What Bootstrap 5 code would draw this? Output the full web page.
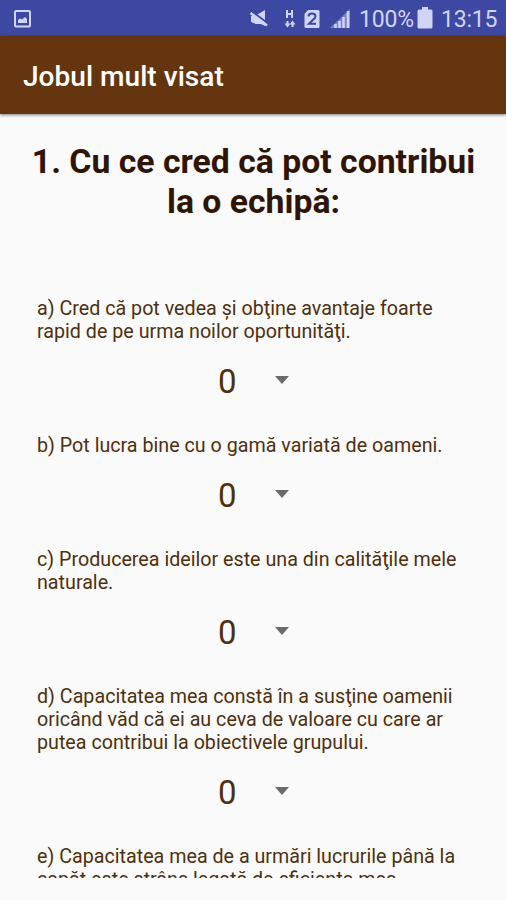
<!DOCTYPE html>
<html lang="ro">
<head>
<meta charset="utf-8">
<meta name="viewport" content="width=device-width, initial-scale=1">
<title>Jobul mult visat</title>
<link href="https://cdn.jsdelivr.net/npm/bootstrap@5.3.0/dist/css/bootstrap.min.css" rel="stylesheet">
<style>
body{font-family:Roboto,"Liberation Sans",sans-serif;background:#fafafa;color:#4e300e;height:900px}
.status-bar{height:36px;background:#3c48a2;color:#d0d5f5;font-size:23px;line-height:34px;padding:2px 10px 0 14px}
.status-bar svg{display:block;flex:none}
.signal{margin-left:10px}
.battery{margin:-2px 0 0 4px}
.pct{margin-left:9px;width:54px;letter-spacing:-.2px;padding-top:2px}
.clock{margin-left:8px;width:55px;letter-spacing:-.2px;padding-top:2px}
.app-bar{height:78px;background:#65350f;padding:4px 23px 0;box-shadow:0 1px 3px rgba(0,0,0,.5);z-index:1}
.app-title{font-size:28.1px;font-weight:500;color:#fff;line-height:1}
.quiz{height:764px;padding:28px 24px 0 25px}
.quiz-title{font-size:33.75px;font-weight:700;line-height:40px;color:#2f1505;margin-bottom:75px}
.question{font-size:19.7px;line-height:23px;padding-left:12px;white-space:nowrap}
.picker{height:91px;padding:19px 0 0 193px;font-size:33px;line-height:40px}
.picker svg{margin:14px 0 0 38px}
</style>
<script src="https://cdn.jsdelivr.net/npm/bootstrap@5.3.0/dist/js/bootstrap.bundle.min.js"></script>
</head>
<body class="overflow-hidden d-flex flex-column">
<header class="status-bar d-flex align-items-center">
  <svg width="17" height="18" viewBox="0 0 17 18"><rect x="1" y="1" width="15" height="15.500" rx="1" fill="none" stroke="#d0d5f5" stroke-width="2"/><path d="M4 13V10l2-1.500 2 1 3-2.500 2 2v4z" fill="#d0d5f5"/></svg>
  <svg class="ms-auto" width="18" height="20" viewBox="0 0 18 20"><path d="M1 7h4l10-6v16l-4-2H6l-5-2z" fill="#d0d5f5"/><path d="M2 2.500l16 12" stroke="#3c48a2" stroke-width="2"/><path d="M.5 4l16.500 12.500" stroke="#d0d5f5" stroke-width="2.500"/></svg>
  <svg class="ms-3" width="12" height="20" viewBox="0 0 12 20"><path d="M3 1v8M8 1v8M3 5h5" stroke="#d0d5f5" stroke-width="2"/><path d="M3.500 12v4M8.500 14v4" stroke="#d0d5f5" stroke-width="2"/><path d="M.5 14.500h6l-3 4zM5.500 15.500h6l-3-4z" fill="#d0d5f5"/></svg>
  <svg class="ms-2" width="16" height="20" viewBox="0 0 16 20"><path d="M4 1h10q1.500 0 1.500 1.500v15q0 1.500-1.500 1.500H2Q.5 19 .5 17.500V5z" fill="#d0d5f5"/><path d="M4.500 7.500q0-3 3.500-3t3.500 2.700q0 2-3 4L5 14.800h7" fill="none" stroke="#3c48a2" stroke-width="2"/></svg>
  <svg class="signal" width="20" height="20" viewBox="0 0 20 20"><path d="M0 19L20 0v19z" fill="#7983c8"/><path d="M5.500 19v-4M9.500 19v-7M13.500 19V8M18 19V2" stroke="#d0d5f5" stroke-width="2.500"/></svg>
  <span class="pct">100%</span>
  <svg class="battery" width="16" height="22" viewBox="0 0 16 22"><path d="M5 0h6v2.500h3q1.500 0 1.500 1.500v16q0 1.500-1.500 1.500H2Q.5 21.500.5 20V4Q.5 2.500 2 2.500h3z" fill="#d0d5f5"/></svg>
  <span class="clock">13:15</span>
</header>
<nav class="app-bar d-flex align-items-center position-relative"><span class="app-title">Jobul mult visat</span></nav>
<main class="quiz overflow-hidden">
  <h1 class="quiz-title text-center">1. Cu ce cred că pot contribui<br>la o echipă:</h1>
  <div class="question">a) Cred că pot vedea şi obţine avantaje foarte<br>rapid de pe urma noilor oportunităţi.</div>
  <div class="picker d-flex align-items-start"><span>0</span><svg width="14" height="8" viewBox="0 0 14 8"><path d="M0 0h14L7 8z" fill="#6b6b6b"/></svg></div>
  <div class="question">b) Pot lucra bine cu o gamă variată de oameni.</div>
  <div class="picker d-flex align-items-start"><span>0</span><svg width="14" height="8" viewBox="0 0 14 8"><path d="M0 0h14L7 8z" fill="#6b6b6b"/></svg></div>
  <div class="question">c) Producerea ideilor este una din calităţile mele<br>naturale.</div>
  <div class="picker d-flex align-items-start"><span>0</span><svg width="14" height="8" viewBox="0 0 14 8"><path d="M0 0h14L7 8z" fill="#6b6b6b"/></svg></div>
  <div class="question">d) Capacitatea mea constă în a susţine oamenii<br>oricând văd că ei au ceva de valoare cu care ar<br>putea contribui la obiectivele grupului.</div>
  <div class="picker d-flex align-items-start"><span>0</span><svg width="14" height="8" viewBox="0 0 14 8"><path d="M0 0h14L7 8z" fill="#6b6b6b"/></svg></div>
  <div class="question">e) Capacitatea mea de a urmări lucrurile până la<br>capăt este strâns legată de eficienţa mea</div>
</main>
</body>
</html>
